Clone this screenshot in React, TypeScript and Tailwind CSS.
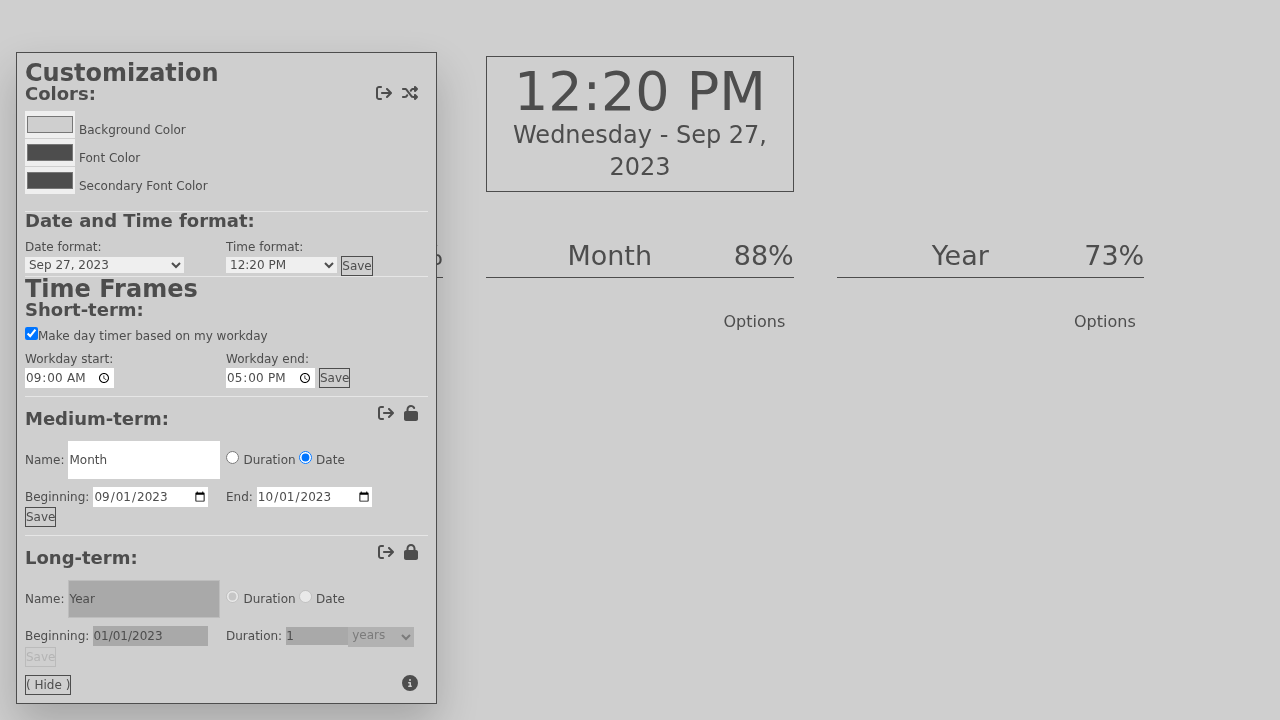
import React from 'react';
import { FaArrowRightFromBracket, FaShuffle, FaLock, FaUnlock, FaCircleInfo } from 'react-icons/fa6';

const SaveButton: React.FC<{ disabled?: boolean; wide?: boolean }> = ({ disabled, wide }) => (
  <button
    disabled={disabled}
    className={`h-[20px] border text-center text-[12px] leading-[18px] ${wide ? 'w-[32px]' : 'w-[31px]'} ${
      disabled ? 'border-[#bbbbbb] text-[#b4b4b4]' : 'border-[#4d4d4d] text-[#4d4d4d]'
    }`}
  >
    Save
  </button>
);

const Divider = () => <hr className="border-0 border-t border-[#e6e6e6]" />;

const ColorRow: React.FC<{ value: string; label: string }> = ({ value, label }) => (
  <div className="flex h-[28px] items-end">
    <input type="color" defaultValue={value} className="mb-[1px] h-[27px] w-[50px] bg-[#efefef] px-0 py-[1px]" />
    <span className="ml-[4px] text-[12px] leading-[18px]">{label}</span>
  </div>
);

const IconPair: React.FC<{ second: React.ReactNode; gap: string }> = ({ second, gap }) => (
  <div className={`flex items-center ${gap}`}>
    <FaArrowRightFromBracket className="h-[16px] w-[16px]" />
    {second}
  </div>
);

const TimerBar: React.FC<{ name: string; percent: string }> = ({ name, percent }) => (
  <div className="w-[307.5px]">
    <div className="flex h-[43px] items-center border-b border-[#4d4d4d] text-[27px]">
      <span className="w-[247px] text-center">{name}</span>
      <span className="flex-1 text-right">{percent}</span>
    </div>
    <div className="mt-[33px] pr-[8.5px] text-right text-[16px] leading-[22px]">Options</div>
  </div>
);

export default function App() {
  return (
    <div className="h-[720px] w-[1280px] overflow-hidden bg-[#cfcfcf]">
      {/* no background on this layer, which keeps the text greyscale like the reference */}
      <div className="relative h-full font-['DejaVu_Sans',sans-serif] text-[#4d4d4d] will-change-transform">
        {/* Clock and timers behind the panel */}
        <div className="flex flex-col items-center pt-[56px]">
          <div className="flex h-[136px] w-[308px] flex-col items-center border border-[#4d4d4d] text-center">
            <div className="h-[62px] text-[54px] leading-[70px]">12:20 PM</div>
            <div className="text-[24px] leading-[32px]">Wednesday - Sep 27, 2023</div>
          </div>
          <div className="mt-[43px] flex gap-[43px]">
            <TimerBar name="Day" percent="42%" />
            <TimerBar name="Month" percent="88%" />
            <TimerBar name="Year" percent="73%" />
          </div>
        </div>

        {/* Customization panel */}
        <div className="absolute top-[52px] left-[16px] h-[652px] w-[421px] border border-[#4d4d4d] bg-[#cfcfcf] px-[8px] pt-[7px] text-[12px] shadow-[0_20px_40px_rgba(0,0,0,0.2)]">
          <h1 className="h-[26px] text-[24px] leading-[26px] font-bold">Customization</h1>
          <div className="flex h-[16px] items-center justify-between pr-[10px]">
            <h2 className="text-[18px] leading-[18px] font-bold">Colors:</h2>
            <div className="mb-[2px]">
              <IconPair gap="gap-[10px]" second={<FaShuffle className="h-[16px] w-[16px]" />} />
            </div>
          </div>
          <div className="mt-[9px] mb-[16px]">
            <ColorRow value="#cfcfcf" label="Background Color" />
            <ColorRow value="#4d4d4d" label="Font Color" />
            <ColorRow value="#4d4d4d" label="Secondary Font Color" />
          </div>
          <Divider />
          <h2 className="h-[18px] text-[18px] leading-[18px] font-bold">Date and Time format:</h2>
          <div className="mt-[8px] grid h-[38px] grid-cols-[201px_1fr]">
            <div>
              <div className="h-[18px] leading-[18px]">Date format:</div>
              <select className="mt-[1px] h-[16px] w-[159px] bg-[#efefef] text-[12px] leading-[16px]">
                <option>Sep 27, 2023</option>
              </select>
            </div>
            <div>
              <div className="h-[18px] leading-[18px]">Time format:</div>
              <div className="flex items-start gap-[4px]">
                <select className="mt-[1px] h-[16px] w-[111px] bg-[#efefef] text-[12px] leading-[16px]">
                  <option>12:20 PM</option>
                </select>
                <SaveButton wide />
              </div>
            </div>
          </div>
          <Divider />
          <h1 className="h-[24px] text-[24px] leading-[24px] font-bold">Time Frames</h1>
          <h2 className="h-[18px] text-[18px] leading-[18px] font-bold">Short-term:</h2>
          <label className="mt-[7px] flex h-[20px] items-center">
            <input type="checkbox" defaultChecked className="mb-[5px] h-[13px] w-[13px]" />
            <span className="leading-[18px]">Make day timer based on my workday</span>
          </label>
          <div className="mt-[4px] grid grid-cols-[201px_1fr]">
            <div>
              <div className="h-[18px] leading-[18px]">Workday start:</div>
              <input type="time" defaultValue="09:00" className="h-[20px] w-[89px] bg-white text-[12px]" />
            </div>
            <div>
              <div className="h-[18px] leading-[18px]">Workday end:</div>
              <div className="flex gap-[4px]">
                <input type="time" defaultValue="17:00" className="h-[20px] w-[89px] bg-white text-[12px]" />
                <SaveButton />
              </div>
            </div>
          </div>
          <div className="mt-[8px]">
            <Divider />
          </div>

          {/* Medium-term */}
          <div className="relative h-[44px]">
            <h2 className="pt-[13px] text-[18px] leading-[18px] font-bold">Medium-term:</h2>
            <div className="absolute top-[8px] right-[9px]">
              <IconPair gap="gap-[9px]" second={<FaUnlock className="h-[16px] w-[16px]" />} />
            </div>
          </div>
          <div className="flex h-[38px] items-center">
            <span>Name:</span>
            <input defaultValue="Month" className="ml-[4px] h-[38px] w-[152px] bg-white pl-[1px] text-[12px]" />
            <input type="radio" name="medium" className="mb-[5px] ml-[6px] h-[13px] w-[13px]" />
            <span className="ml-[4px]">Duration</span>
            <input type="radio" name="medium" defaultChecked className="mb-[5px] ml-[3.5px] h-[13px] w-[13px]" />
            <span className="ml-[4px]">Date</span>
          </div>
          <div className="mt-[8px] grid h-[20px] grid-cols-[201px_1fr]">
            <div className="flex items-center">
              <span>Beginning:</span>
              <input type="date" defaultValue="2023-09-01" className="ml-[4px] h-[20px] w-[115px] bg-white text-[12px]" />
            </div>
            <div className="flex items-center">
              <span>End:</span>
              <input type="date" defaultValue="2023-10-01" className="ml-[4px] h-[20px] w-[115px] bg-white text-[12px]" />
            </div>
          </div>
          <SaveButton />
          <div className="mt-[8px]">
            <Divider />
          </div>

          {/* Long-term */}
          <div className="relative h-[44px]">
            <h2 className="pt-[13px] text-[18px] leading-[18px] font-bold">Long-term:</h2>
            <div className="absolute top-[8px] right-[9px]">
              <IconPair gap="gap-[9px]" second={<FaLock className="h-[16px] w-[16px]" />} />
            </div>
          </div>
          <div className="flex h-[38px] items-center">
            <span>Name:</span>
            <input
              disabled
              defaultValue="Year"
              className="ml-[4px] h-[38px] w-[152px] border border-[#bdbdbd] bg-[#a9a9a9] text-[12px]"
            />
            <input type="radio" name="long" disabled defaultChecked className="mb-[5px] ml-[6px] h-[13px] w-[13px]" />
            <span className="ml-[4px]">Duration</span>
            <input type="radio" name="long" disabled className="mb-[5px] ml-[3.5px] h-[13px] w-[13px]" />
            <span className="ml-[4px]">Date</span>
          </div>
          <div className="mt-[8px] grid h-[20px] grid-cols-[201px_1fr]">
            <div className="flex h-[20px] items-center">
              <span>Beginning:</span>
              <input
                disabled
                defaultValue="01/01/2023"
                className="ml-[4px] h-[20px] w-[115px] bg-[#a9a9a9] text-[12px]"
              />
            </div>
            <div className="flex h-[20px] items-start">
              <span className="leading-[20px]">Duration:</span>
              <input disabled defaultValue="1" className="mt-[1px] ml-[4px] h-[18px] w-[62px] bg-[#a9a9a9] text-[12px]" />
              <select disabled className="mt-[1px] h-[20px] w-[66px] bg-[#b2b2b2] pb-[5px] text-[12px] text-[#7b7b7b]">
                <option>years</option>
              </select>
            </div>
          </div>
          <div className="mt-[1px]">
            <SaveButton disabled />
          </div>
          <div className="mt-[8px] flex items-center justify-between pr-[10px]">
            <button className="h-[20px] w-[46px] border border-[#4d4d4d] text-center text-[12px] leading-[18px] whitespace-nowrap">
              ( Hide )
            </button>
            <FaCircleInfo className="mb-[4px] h-[16px] w-[16px]" />
          </div>
        </div>
      </div>
    </div>
  );
}
